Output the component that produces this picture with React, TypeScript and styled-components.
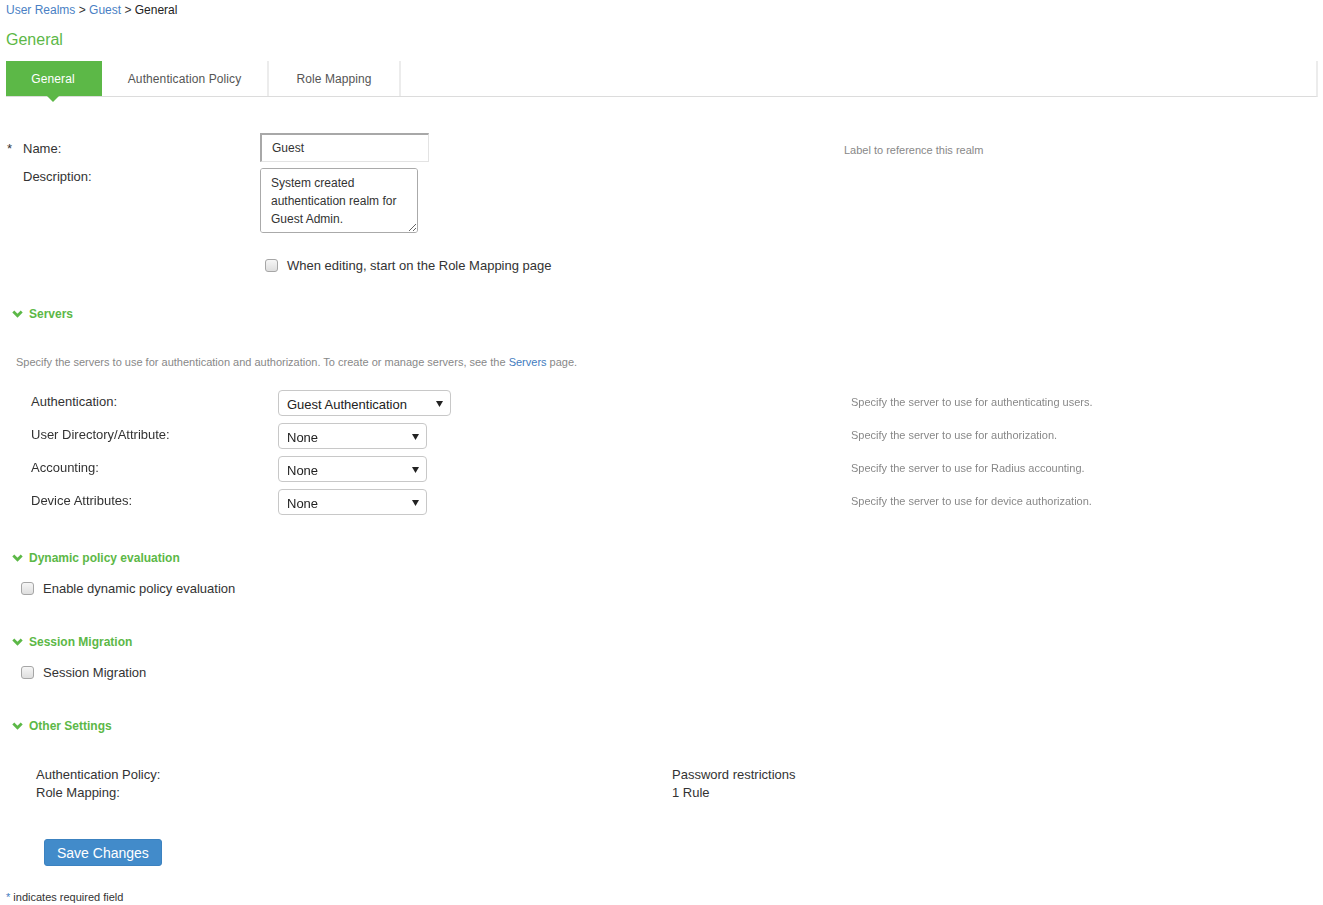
import React from 'react';
import styled, {createGlobalStyle} from 'styled-components';

const GlobalStyle = createGlobalStyle`
  body {
    margin: 0;
    background: #fff;
    font-family: "Liberation Sans", Arial, sans-serif;
    color: #333;
  }
`;

const green = '#5cb847';
const blue = '#3f7cc0';

type ServerRow = {label: string; value: string; width: number; help: string};

const servers: ServerRow[] = [
  {label: 'Authentication:', value: 'Guest Authentication', width: 173, help: 'Specify the server to use for authenticating users.'},
  {label: 'User Directory/Attribute:', value: 'None', width: 149, help: 'Specify the server to use for authorization.'},
  {label: 'Accounting:', value: 'None', width: 149, help: 'Specify the server to use for Radius accounting.'},
  {label: 'Device Attributes:', value: 'None', width: 149, help: 'Specify the server to use for device authorization.'},
];

const tabs = [
  {name: 'General', width: 96},
  {name: 'Authentication Policy', width: 167},
  {name: 'Role Mapping', width: 132},
];

const Chevron: React.FC = () => (
  <svg width="11" height="8" viewBox="0 0 11 8">
    <polyline points="1.3,1.6 5.5,5.8 9.7,1.6" fill="none" stroke={green} strokeWidth="2.8" />
  </svg>
);

const Caret: React.FC = () => (
  <svg width="7" height="6" viewBox="0 0 7 6">
    <polygon points="0,0 7,0 3.5,6" fill="#222" />
  </svg>
);

const Section: React.FC<{title: string; top: number}> = ({title, top}) => (
  <SectionHeader $top={top}>
    <Chevron />
    <span>{title}</span>
  </SectionHeader>
);

const App: React.FC = () => {
  return (
    <>
      <GlobalStyle />
      <Page>
        <Breadcrumb>
          <a>User Realms</a> &gt; <a>Guest</a> &gt; <span className="current">General</span>
        </Breadcrumb>
        <Title>General</Title>
        <TabBar>
          {tabs.map((t, i) => (
            <Tab key={t.name} $active={i === 0} $width={t.width}>
              {t.name}
            </Tab>
          ))}
        </TabBar>

        <FieldRow $top={36} $align="center">
          <Required>*</Required>
          <FieldLabel $pad={2}>Name:</FieldLabel>
          <div>
            <NameInput defaultValue="Guest" />
          </div>
          <Help $pad={10}>Label to reference this realm</Help>
        </FieldRow>
        <FieldRow $top={6} $align="start">
          <span />
          <FieldLabel $pad={1}>Description:</FieldLabel>
          <div>
            <DescArea defaultValue={'System created authentication realm for Guest Admin.'} />
          </div>
          <span />
        </FieldRow>
        <FieldRow $top={25} $align="center">
          <span />
          <span />
          <CheckLine $indent={5}>
            <Check type="checkbox" />
            <span>When editing, start on the Role Mapping page</span>
          </CheckLine>
          <span />
        </FieldRow>

        <Section title="Servers" top={32} />
        <SectionNote>
          Specify the servers to use for authentication and authorization. To create or manage servers, see the{' '}
          <a>Servers</a> page.
        </SectionNote>
        <ServerList>
          {servers.map((s) => (
            <ServerItem key={s.label}>
              <ServerLabel>{s.label}</ServerLabel>
              <div>
                <SelectBox style={{width: s.width}}>
                  <span>{s.value}</span>
                  <Caret />
                </SelectBox>
              </div>
              <Help $pad={5}>{s.help}</Help>
            </ServerItem>
          ))}
        </ServerList>

        <Section title="Dynamic policy evaluation" top={35} />
        <CheckLine $indent={15} $top={15}>
          <Check type="checkbox" />
          <span>Enable dynamic policy evaluation</span>
        </CheckLine>

        <Section title="Session Migration" top={37} />
        <CheckLine $indent={15} $top={15}>
          <Check type="checkbox" />
          <span>Session Migration</span>
        </CheckLine>

        <Section title="Other Settings" top={37} />
        <Summary>
          <span>Authentication Policy:</span>
          <span>Password restrictions</span>
          <span>Role Mapping:</span>
          <span>1 Rule</span>
        </Summary>

        <SaveButton>Save Changes</SaveButton>
        <Footnote>
          <span className="star">*</span> indicates required field
        </Footnote>
      </Page>
    </>
  );
};

export default App;

const Page = styled.div`
  padding: 3px 5px 10px 6px;
  a {
    color: ${blue};
    text-decoration: none;
    cursor: pointer;
  }
`;

const Breadcrumb = styled.div`
  font-size: 12px;
  line-height: 14px;
  color: #333;
  a {
    color: #4a7fc4;
  }
  .current {
    color: #222;
  }
`;

const Title = styled.h1`
  margin: 13px 0 0;
  font-size: 16px;
  line-height: 20px;
  font-weight: normal;
  color: ${green};
`;

const TabBar = styled.div`
  display: flex;
  margin-top: 11px;
  height: 35px;
  border-bottom: 1px solid #dcdcdc;
  border-right: 2px solid #ececec;
`;

const Tab = styled.div<{$active?: boolean; $width: number}>`
  position: relative;
  box-sizing: border-box;
  display: flex;
  align-items: center;
  justify-content: center;
  width: ${(p) => p.$width}px;
  font-size: 12px;
  letter-spacing: 0.1px;
  color: ${(p) => (p.$active ? '#fff' : '#555')};
  background: ${(p) => (p.$active ? green : '#fff')};
  border-right: 2px solid ${(p) => (p.$active ? green : '#ececec')};
  cursor: pointer;
  ${(p) =>
    p.$active &&
    `
    &::after {
      content: '';
      position: absolute;
      left: 50%;
      bottom: -6px;
      margin-left: -6px;
      border-left: 6px solid transparent;
      border-right: 6px solid transparent;
      border-top: 6px solid ${green};
    }
  `}
`;

const FieldRow = styled.div<{$top: number; $align: string}>`
  display: grid;
  grid-template-columns: 16px 237px 584px 1fr;
  align-items: ${(p) => p.$align};
  margin-top: ${(p) => p.$top}px;
  padding-left: 1px;
`;

const Required = styled.span`
  font-size: 13px;
  color: #333;
  padding-top: 2px;
`;

const FieldLabel = styled.label<{$pad: number}>`
  font-size: 13px;
  line-height: 16px;
  padding-top: ${(p) => p.$pad}px;
  color: #333;
`;

const Help = styled.div<{$pad: number}>`
  font-size: 11px;
  line-height: 14px;
  color: #888;
  padding-top: ${(p) => p.$pad}px;
  align-self: start;
`;

const NameInput = styled.input`
  box-sizing: border-box;
  width: 169px;
  height: 29px;
  padding: 0 10px;
  font-family: inherit;
  font-size: 12px;
  color: #333;
  border-style: solid;
  border-width: 2px 1px 1px 2px;
  border-color: #a8a8a8 #e3e3e3 #e3e3e3 #a8a8a8;
  outline: none;
`;

const DescArea = styled.textarea`
  box-sizing: border-box;
  display: block;
  width: 158px;
  height: 65px;
  padding: 5px 10px;
  font-family: inherit;
  font-size: 12px;
  line-height: 18px;
  color: #333;
  border: 1px solid #aaa;
  border-radius: 3px;
  outline: none;
`;

const CheckLine = styled.label<{$indent: number; $top?: number}>`
  display: flex;
  align-items: center;
  gap: 9px;
  margin-top: ${(p) => p.$top ?? 0}px;
  padding-left: ${(p) => p.$indent}px;
  font-size: 13px;
  line-height: 16px;
  color: #333;
`;

const Check = styled.input`
  appearance: none;
  box-sizing: border-box;
  width: 13px;
  height: 13px;
  margin: 0;
  margin-top: -2px;
  border: 1px solid #a6a6a6;
  border-radius: 3px;
  background: linear-gradient(#f6f6f6, #dedede);
`;

const SectionHeader = styled.div<{$top: number}>`
  display: flex;
  align-items: center;
  gap: 6px;
  margin-top: ${(p) => p.$top}px;
  padding-left: 6px;
  font-size: 12px;
  line-height: 16px;
  font-weight: bold;
  color: ${green};
`;

const SectionNote = styled.p`
  margin: 33px 0 0;
  padding-left: 10px;
  font-size: 11px;
  line-height: 14px;
  color: #888;
`;

const ServerList = styled.div`
  display: flex;
  flex-direction: column;
  gap: 7px;
  margin-top: 21px;
  padding-left: 25px;
`;

const ServerItem = styled.div`
  display: grid;
  grid-template-columns: 247px 573px 1fr;
  align-items: start;
`;

const ServerLabel = styled.span`
  font-size: 13px;
  line-height: 16px;
  padding-top: 4px;
  color: #333;
`;

const SelectBox = styled.div`
  box-sizing: border-box;
  display: flex;
  align-items: center;
  justify-content: space-between;
  height: 26px;
  padding: 2px 7px 0 8px;
  font-size: 13px;
  color: #222;
  border: 1px solid #c8c8c8;
  border-radius: 4px;
  background: #fff;
  cursor: pointer;
`;

const Summary = styled.div`
  display: grid;
  grid-template-columns: 636px 1fr;
  margin-top: 32px;
  padding-left: 30px;
  font-size: 13px;
  line-height: 18px;
  color: #333;
`;

const SaveButton = styled.button`
  display: block;
  margin: 37px 0 0 38px;
  height: 27px;
  padding: 0 12px;
  font-family: inherit;
  font-size: 14px;
  color: #fff;
  background: #428bca;
  border: 1px solid #3c82c0;
  border-radius: 3px;
  cursor: pointer;
`;

const Footnote = styled.div`
  margin-top: 24px;
  font-size: 11px;
  line-height: 14px;
  color: #333;
  .star {
    color: ${blue};
  }
`;
